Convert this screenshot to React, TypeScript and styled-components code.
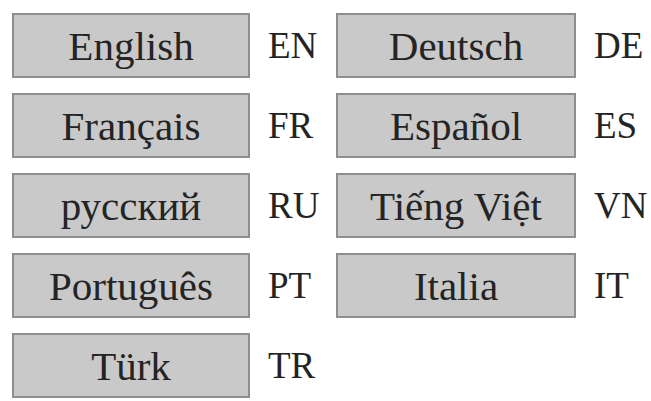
import React from 'react';
import styled, { createGlobalStyle } from 'styled-components';

type Language = { name: string; code: string };

// two columns, read row by row
const languages: Language[] = [
  { name: 'English', code: 'EN' },
  { name: 'Deutsch', code: 'DE' },
  { name: 'Français', code: 'FR' },
  { name: 'Español', code: 'ES' },
  { name: 'русский', code: 'RU' },
  { name: 'Tiếng Việt', code: 'VN' },
  { name: 'Português', code: 'PT' },
  { name: 'Italia', code: 'IT' },
  { name: 'Türk', code: 'TR' },
];

const GlobalStyle = createGlobalStyle`
  body {
    margin: 0;
    background: #ffffff;
    font-family: "Times New Roman", "Liberation Serif", Tinos, serif;
  }
`;

const Grid = styled.div`
  display: grid;
  grid-template-columns: 238px 86px 240px auto;
  grid-auto-rows: 65px;
  row-gap: 15px;
  padding: 13px 0 0 12px;
`;

const LangButton = styled.button`
  display: flex;
  align-items: center;
  justify-content: center;
  padding: 0;
  margin: 0;
  background: #c9c9c9;
  border: 2px solid #8e8e8e;
  font-family: "Times New Roman", "Liberation Serif", Tinos, serif;
  font-size: 41px;
  color: #242424;
`;

const Code = styled.div`
  display: flex;
  align-items: center;
  padding-left: 18px;
  font-family: "Times New Roman", "Liberation Serif", Tinos, serif;
  font-size: 37px;
  color: #242424;
`;

export default function App() {
  return (
    <>
      <GlobalStyle />
      <Grid>
        {languages.map((lang) => (
          <React.Fragment key={lang.code}>
            <LangButton type="button">{lang.name}</LangButton>
            <Code>{lang.code}</Code>
          </React.Fragment>
        ))}
      </Grid>
    </>
  );
}
